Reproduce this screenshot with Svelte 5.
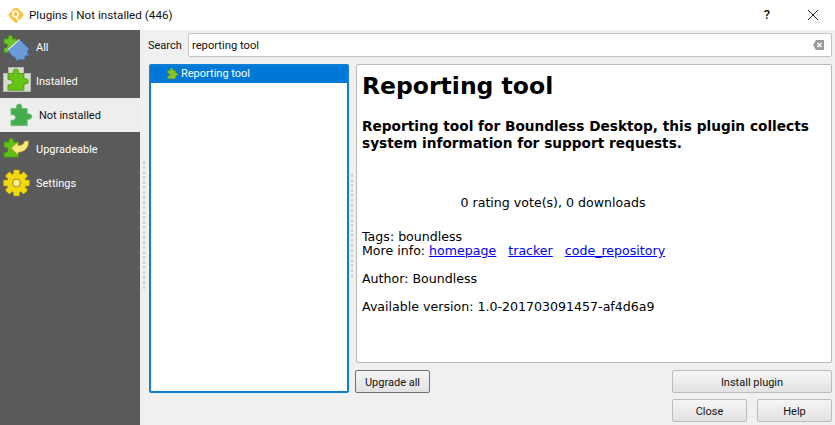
<script>
    const menu = [
        { name: 'All', icon: 'all' },
        { name: 'Installed', icon: 'installed' },
        { name: 'Not installed', icon: 'notinstalled', active: true },
        { name: 'Upgradeable', icon: 'upgrade' },
        { name: 'Settings', icon: 'settings' }
    ];
    const puzzle = 'M4 8h6V6a3 3 0 1 1 6 0v2h6v6h2a3 3 0 1 1 0 6h-2v7H4v-6h2a3 3 0 0 0 0-6H4z';
    const leftDots = Array.from({ length: 26 });
    const rightDots = Array.from({ length: 21 });
    const teeth = [0, 45, 90, 135, 180, 225, 270, 315];
</script>

<div class="window">
    <header class="titlebar">
        <svg class="logo" viewBox="0 0 18 18" width="18" height="18">
            <rect x="3" y="3" width="12" height="12" rx="2.5" transform="rotate(45 9 9)" fill="#fcc33c" />
            <circle cx="8.5" cy="8" r="2.8" fill="none" stroke="#fff" stroke-width="1.5" />
            <path d="M9 11l2.5 3.5" stroke="#fff" stroke-width="1.5" />
        </svg>
        <span class="title">Plugins | Not installed (446)</span>
        <span class="help-q">?</span>
        <svg class="close-x" viewBox="0 0 12 12" width="12" height="12">
            <path d="M1 1l10 10M11 1 1 11" stroke="#222" stroke-width="1" fill="none" />
        </svg>
    </header>

    <div class="body">
        <nav class="sidebar">
            {#each menu as item}
                <div class="item" class:active={item.active}>
                    <svg class="icon" viewBox="0 0 30 30" width="30" height="30">
                        {#if item.icon === 'all'}
                            <path d={puzzle} transform="translate(-1 1) scale(.72)" fill="#6cc524" stroke="#3f8a14" />
                            <path d="M6 19 18 8l9 9-2 3 2 3-4 1-1 4-4-1-3 2-2-4-3-1-1-2z" fill="#6c9bd6" stroke="#4a78b4" />
                            <path d="M6 18 17.5 7.5" stroke="#dbe8f6" stroke-width="1.2" />
                        {:else if item.icon === 'installed'}
                            <rect x="6.5" y="1.5" width="15" height="7" fill="#d8dbd2" stroke="#b5b8ae" />
                            <rect x="1.5" y="7.5" width="27" height="18" fill="#d8dbd2" stroke="#b5b8ae" />
                            <path d={puzzle} transform="translate(2.5 .4) scale(.88)" fill="#68c414" stroke="#4c9a0c" />
                        {:else if item.icon === 'notinstalled'}
                            <path d={puzzle} transform="translate(2.4 1.3) scale(.9)" fill="#44ad50" stroke="#6fbb78" />
                        {:else if item.icon === 'upgrade'}
                            <path d={puzzle} transform="translate(-1.2 1.6) scale(.8)" fill="#62bf18" stroke="#3f8a14" />
                            <path d="M9 14l7-6v3.5c4 0 6-1.5 6.5-4.5h4c.5 6-3 11-10.5 11.5v2.5z" fill="#f8e67e" stroke="#a8922a" stroke-width=".7" />
                        {:else}
                            {#each teeth as a}
                                <rect x="11.5" y="2" width="6" height="8" rx="1" transform="rotate({a} 14.5 15)" fill="#f2d90e" stroke="#b79c06" stroke-width=".6" />
                            {/each}
                            <circle cx="14.5" cy="15" r="9.5" fill="#f2d90e" />
                            <circle cx="14.5" cy="15" r="4.6" fill="#b5a015" />
                            <circle cx="14.5" cy="15" r="3.2" fill="#f8f09a" />
                        {/if}
                    </svg>
                    <span>{item.name}</span>
                </div>
            {/each}
        </nav>

        <main class="content">
            <div class="search">
                <label for="q">Search</label>
                <div class="field">
                    <input id="q" value="reporting tool" />
                    <svg viewBox="0 0 12 12" width="12" height="12">
                        <path d="M3 1h8v10H3L0 6z" fill="#9a9a9a" />
                        <path d="M4.5 4l4 4M8.5 4l-4 4" stroke="#fff" stroke-width="1.6" />
                    </svg>
                </div>
            </div>

            <div class="panes">
                <div class="splitter">
                    {#each leftDots as _}<i></i>{/each}
                </div>
                <div class="left">
                    <div class="list">
                        <div class="row">
                            <svg viewBox="0 0 30 30" width="13" height="13">
                                <path d={puzzle} fill="#8cc21a" stroke="#6f9a1a" />
                            </svg>
                            <span>Reporting tool</span>
                        </div>
                    </div>
                </div>
                <div class="splitter second">
                    {#each rightDots as _}<i></i>{/each}
                </div>
                <div class="right">
                    <article class="details">
                        <h1>Reporting tool</h1>
                        <h3>Reporting tool for Boundless Desktop, this plugin collects system information for support requests.</h3>
                        <p class="votes">0 rating vote(s), 0 downloads</p>
                        <p class="tags">Tags: boundless<br />More info: <a href="#h">homepage</a><span class="sp"></span><a href="#t">tracker</a><span class="sp"></span><a href="#c">code_repository</a></p>
                        <p class="author">Author: Boundless</p>
                        <p class="version">Available version: 1.0-201703091457-af4d6a9</p>
                    </article>
                    <div class="actions">
                        <button class="upgrade">Upgrade all</button>
                        <button class="install">Install plugin</button>
                    </div>
                </div>
            </div>

            <div class="footer">
                <button>Close</button>
                <button>Help</button>
            </div>
        </main>
    </div>
</div>

<style>
    :global(body) {
        margin: 0;
        background: #f0f0f0;
    }
    .window {
        width: 835px;
        height: 425px;
        display: flex;
        flex-direction: column;
        overflow: hidden;
        font-family: Roboto, "Noto Sans", sans-serif;
        font-size: 11px;
        color: #111;
    }
    .titlebar {
        height: 30px;
        flex: none;
        background: #fff;
        display: flex;
        align-items: center;
        padding: 0 0 1px 7px;
        box-sizing: border-box;
    }
    .title {
        margin-left: 4px;
        font-size: 11.7px;
        flex: 1;
    }
    .help-q {
        font-size: 13px;
        font-weight: 500;
        margin-right: 37px;
    }
    .close-x {
        margin-right: 16px;
    }
    .body {
        flex: 1;
        display: flex;
        min-height: 0;
    }
    .sidebar {
        width: 140px;
        flex: none;
        background: #5a5a5a;
        color: #fff;
    }
    .item {
        height: 34px;
        display: flex;
        align-items: center;
        padding-left: 2px;
        gap: 4px;
    }
    .item span {
        padding-top: 1px;
    }
    .item.active {
        background: #eeeeee;
        color: #111;
        padding-left: 5px;
    }
    .content {
        flex: 1;
        min-width: 0;
        background: #f0f0f0;
        padding: 3px 3px 3px 0;
        display: flex;
        flex-direction: column;
    }
    .search {
        height: 24px;
        display: flex;
        align-items: center;
        margin-left: 8px;
    }
    .search label {
        width: 40px;
        padding-top: 1px;
    }
    .field {
        flex: 1;
        height: 24px;
        box-sizing: border-box;
        background: #fff;
        border: 1px solid #c4c4c4;
        border-radius: 2px;
        display: flex;
        align-items: center;
        padding-right: 6px;
    }
    .field input {
        flex: 1;
        border: none;
        outline: none;
        background: none;
        font: inherit;
        font-size: 11.2px;
        color: #111;
        padding: 1px 3px 0;
    }
    .panes {
        margin-top: 7px;
        flex: 1;
        min-height: 0;
        display: flex;
    }
    .splitter {
        width: 3px;
        margin: 0 3px;
        flex: none;
        display: flex;
        flex-direction: column;
        justify-content: center;
        gap: 2px;
        padding-bottom: 7px;
        box-sizing: border-box;
    }
    .splitter i {
        width: 2px;
        height: 3px;
        background: #d2d2d2;
    }
    .splitter.second {
        margin: 0 2px 0 2px;
        width: 2px;
    }
    .left {
        width: 200px;
        flex: none;
        display: flex;
    }
    .list {
        flex: 1;
        height: 329px;
        box-sizing: border-box;
        background: #fff;
        border: 2px solid #0f7fd4;
        border-radius: 2px;
    }
    .row {
        height: 17px;
        background: #0078d7;
        color: #fff;
        display: flex;
        align-items: center;
        padding: 0 0 3px 15px;
        box-sizing: border-box;
        gap: 2px;
    }
    .right {
        flex: 1;
        min-width: 0;
        display: flex;
        flex-direction: column;
    }
    .details {
        height: 299px;
        box-sizing: border-box;
        margin-left: 1px;
        background: #fff;
        border: 1px solid #b9b9b9;
        border-radius: 2px;
        padding: 5px 5px;
        font-family: "DejaVu Sans", Verdana, sans-serif;
        font-size: 12.6px;
        color: #000;
        line-height: 14px;
    }
    .details h1 {
        margin: 0;
        font-size: 23.5px;
        line-height: 32px;
        font-weight: bold;
    }
    .details h3 {
        margin: 16px 0 0;
        font-size: 13.7px;
        line-height: 17px;
        font-weight: bold;
    }
    .details p {
        margin: 0;
    }
    .votes {
        text-align: center;
        padding: 44px 82px 0 0;
    }
    .tags {
        padding-top: 20px;
    }
    .sp {
        display: inline-block;
        width: 12px;
    }
    .details a {
        color: #0000ee;
    }
    .author,
    .version {
        padding-top: 14px;
    }
    .actions {
        display: flex;
        justify-content: space-between;
        margin-top: 7px;
    }
    button {
        height: 23px;
        box-sizing: border-box;
        padding: 1px 0 0;
        font: inherit;
        color: #111;
        background: linear-gradient(#f6f6f6, #e2e2e2);
        border: 1px solid #bcbcbc;
        border-radius: 2px;
    }
    .upgrade {
        width: 75px;
        border-color: #6f6f6f;
    }
    .install {
        width: 160px;
    }
    .footer {
        display: flex;
        justify-content: flex-end;
        gap: 10px;
        margin-top: 6px;
    }
    .footer button {
        width: 75px;
    }
</style>
